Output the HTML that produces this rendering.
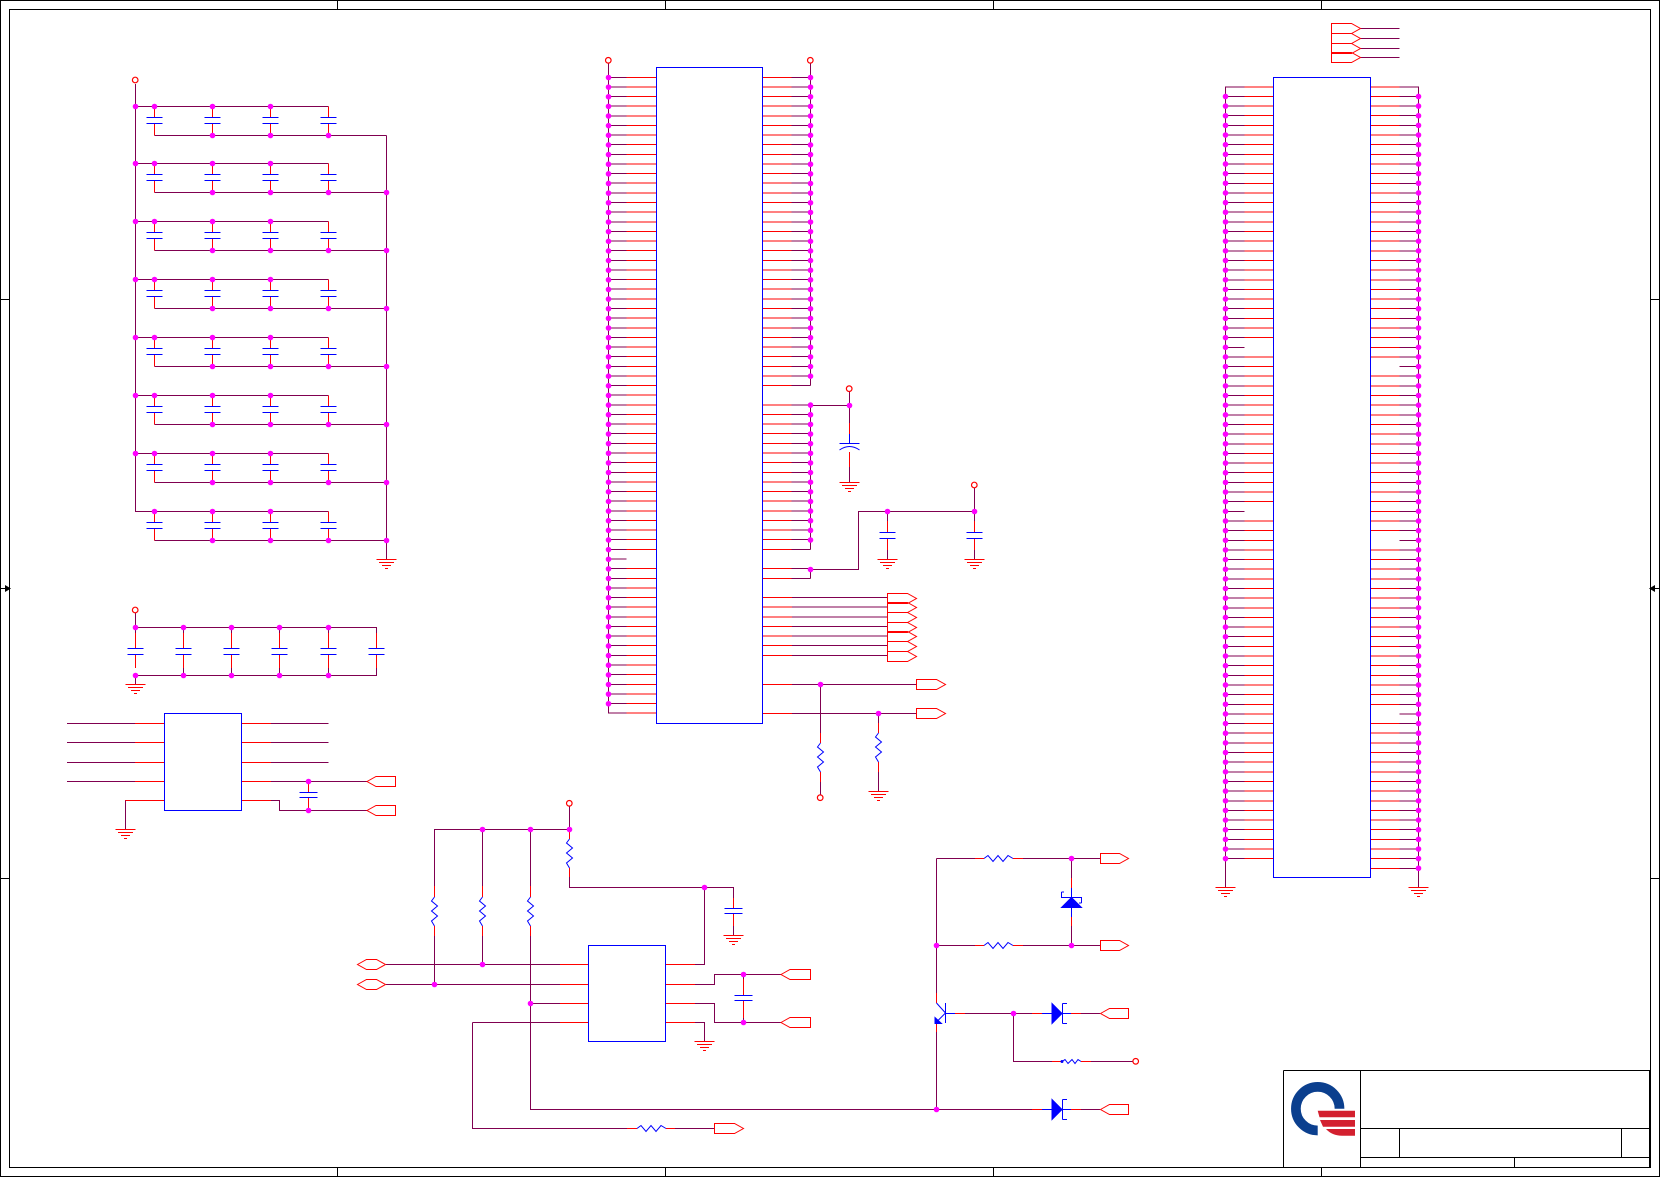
<!DOCTYPE html>
<html><head><meta charset="utf-8"><title>Schematic</title>
<style>html,body{margin:0;padding:0;background:#fff;width:1661px;height:1178px;overflow:hidden}svg{display:block}</style></head>
<body>
<svg xmlns="http://www.w3.org/2000/svg" width="1661" height="1178" viewBox="0 0 1661 1178">
<defs>
<g id="g" fill="none" stroke="#f00" shape-rendering="crispEdges"><path d="M-10 0H10M-7.500 3H7.500M-4.500 6H4.500M-1.500 9H1.500"/></g>
<path id="rv" fill="none" stroke="#00f" d="M0 0L-3 4L3 9L-3 14L3 19L-3 24L0 29"/>
<path id="rh" fill="none" stroke="#00f" d="M0 0L4 -3L9 3L14 -3L19 3L24 -3L29 0"/>
<g id="row" fill="none" shape-rendering="crispEdges">
<path stroke="#800050" d="M135 0H328.500M154.500 29H386.500"/>
<path stroke="#f00" d="M154.500 0V11M154.500 17V29M212.500 0V11M212.500 17V29M270.500 0V11M270.500 17V29M328.500 0V11M328.500 17V29"/>
<path stroke="#00f" d="M146.500 11H162.500M146.500 17H162.500M204.500 11H220.500M204.500 17H220.500M262.500 11H278.500M262.500 17H278.500M320.500 11H336.500M320.500 17H336.500"/>
</g>
<g id="dt"><circle cx="154.500" cy="0" r="2.800"/><circle cx="212.500" cy="0" r="2.800"/><circle cx="270.500" cy="0" r="2.800"/><circle cx="212.500" cy="29" r="2.800"/><circle cx="270.500" cy="29" r="2.800"/><circle cx="328.500" cy="29" r="2.800"/></g>
</defs>
<rect width="1661" height="1178" fill="#fff"/>

<!-- frame -->
<g fill="none" stroke="#000" shape-rendering="crispEdges">
<rect x="0.500" y="0.500" width="1659" height="1176"/>
<rect x="9.500" y="9.500" width="1641" height="1158"/>
<path d="M337.500 0V9M665.500 0V9M993.500 0V9M1321.500 0V9M337.500 1168V1177M665.500 1168V1177M993.500 1168V1177M1321.500 1168V1177M0 299.500H9M0 878.500H9M1651 299.500H1660M1651 878.500H1660M0 588.500H9M1651 588.500H1660"/>
<path d="M1283.500 1070.500H1650.500M1283.500 1070.500V1167M1360.500 1070.500V1167M1360.500 1128.500H1650M1360.500 1157.500H1650M1399.500 1128.500V1157.500M1621.500 1128.500V1157.500M1514.500 1157.500V1167M1649.500 1070.500V1168"/>
</g>
<path d="M5 585L11 588.500L5 592ZM1655 585L1649 588.500L1655 592Z" fill="#000"/>

<!-- logo -->
<path d="M1339.500 1108.700A21.800 21.800 0 1 0 1317.700 1130.500" fill="none" stroke="#0b3f8e" stroke-width="9.700"/>
<path d="M1317.700 1110.700H1355V1117.300H1319.500ZM1320 1120H1355V1126.700H1323ZM1326 1129H1355V1135.700H1342Q1332 1135.700 1326 1129Z" fill="#d3202f"/>

<!-- decap block 1 -->
<use href="#row" y="106.500"/><use href="#row" y="163.500"/><use href="#row" y="221.500"/><use href="#row" y="279.500"/><use href="#row" y="337.500"/><use href="#row" y="395.500"/><use href="#row" y="453.500"/><use href="#row" y="511.500"/>
<path shape-rendering="crispEdges" fill="none" stroke="#800050" d="M135.500 84V511.500M386.500 135.500V559"/>
<use href="#g" x="386.500" y="559.500"/>
<g fill="#f0f"><use href="#dt" y="106.500"/><use href="#dt" y="163.500"/><use href="#dt" y="221.500"/><use href="#dt" y="279.500"/><use href="#dt" y="337.500"/><use href="#dt" y="395.500"/><use href="#dt" y="453.500"/><use href="#dt" y="511.500"/>
<path stroke="#f0f" stroke-width="5.600" stroke-linecap="round" d="M135.500 106.500h.01M135.500 163.500h.01M135.500 221.500h.01M135.500 279.500h.01M135.500 337.500h.01M135.500 395.500h.01M135.500 453.500h.01M386.500 192.500h.01M386.500 250.500h.01M386.500 308.500h.01M386.500 366.500h.01M386.500 424.500h.01M386.500 482.500h.01M386.500 540.500h.01"/></g>

<!-- main purple wires -->
<g fill="none" stroke="#800050" shape-rendering="crispEdges">
<path d="M135.500 613V627.500H376.500V633M135.500 627.500V633M183.500 627.500V633M231.500 627.500V633M279.500 627.500V633M328.500 627.500V633M135.500 675.500V684M135.500 675.500H376.500V668M183.500 675.500V668M231.500 675.500V668M279.500 675.500V668M328.500 675.500V668"/>
<path d="M67 723.500H135M67 742.500H135M67 762.500H135M67 781.500H135M135 800.500H125.500V829M271 723.500H328.500M271 742.500H328.500M271 762.500H328.500M271 781.500H367M271 800.500H279.500V810.500H367"/>
<path d="M608.500 63V713.500M810.500 63V385.500M810.500 405.500V549.500M810.500 405.500H849.500V423M849.500 392V405M849.500 467V482M810.500 569.500V578.500M810.500 569.500H858.500V511.500H974.500M974.500 488V521M974.500 550V559M887.500 511.500V521M887.500 550V559"/>
<path d="M792 684.500H916.500M792 713.500H916.500M820.500 684.500V733M820.500 782V795M878.500 713.500V723M878.500 772V791"/>
<path d="M569.500 806V829.500H434.500V886M482.500 829.500V886M530.500 829.500V886M569.500 877V887.500H733.500V898M733.500 926V935M704.500 887.500V964.500H695M434.500 936V984.500M482.500 936V964.500M530.500 936V1109.500H1032M386 964.500H560M386 984.500H560M530.500 1003.500H560M472.500 1022.500H560M472.500 1022.500V1128.500H627M675 1128.500H714"/>
<path d="M695 984.500H714.500V974.500H781M695 1003.500H714.500V1022.500H781M695 1022.500H704.500V1041M743.500 974.500V985M743.500 1012V1022.500"/>
<path d="M936.500 858.500H975M1023 858.500H1100M936.500 945.500H975M1023 945.500H1100M936.500 858.500V993M936.500 1032V1109.500M1071.500 858.500V878M1071.500 926V945.500M965 1013.500H1032M1081 1013.500H1100M1013.500 1013.500V1061.500H1052M1091 1061.500H1133M1081 1109.500H1100"/>
<path d="M1360 28.500H1399.500M1360 38.500H1399.500M1360 48.500H1399.500M1360 57.500H1399.500M1225.500 86.500V887M1418.500 86.500V887"/>
</g>

<!-- combs: mid IC left -->
<g fill="none" shape-rendering="crispEdges">
<line x1="617.500" x2="617.500" y1="76.750" y2="713.660" stroke="#800050" stroke-width="18" stroke-dasharray="1 8.635"/>
<line x1="641.500" x2="641.500" y1="76.750" y2="549.870" stroke="#f00" stroke-width="30" stroke-dasharray="1 8.635"/>
<line x1="641.500" x2="641.500" y1="568.130" y2="713.660" stroke="#f00" stroke-width="30" stroke-dasharray="1 8.635"/>
<!-- mid IC right -->
<line x1="777.500" x2="777.500" y1="76.750" y2="386.070" stroke="#f00" stroke-width="29" stroke-dasharray="1 8.635"/>
<line x1="777.500" x2="777.500" y1="404.340" y2="549.870" stroke="#f00" stroke-width="29" stroke-dasharray="1 8.635"/>
<line x1="777.500" x2="777.500" y1="568.130" y2="578.770" stroke="#f00" stroke-width="29" stroke-dasharray="1 8.635"/>
<line x1="777.500" x2="777.500" y1="597.040" y2="655.850" stroke="#f00" stroke-width="29" stroke-dasharray="1 8.635"/>
<line x1="801" x2="801" y1="76.750" y2="386.070" stroke="#800050" stroke-width="19" stroke-dasharray="1 8.635"/>
<line x1="801" x2="801" y1="404.340" y2="549.870" stroke="#800050" stroke-width="19" stroke-dasharray="1 8.635"/>
<line x1="801" x2="801" y1="568.130" y2="578.770" stroke="#800050" stroke-width="19" stroke-dasharray="1 8.635"/>
<line x1="839.750" x2="839.750" y1="597.040" y2="655.850" stroke="#800050" stroke-width="95.500" stroke-dasharray="1 8.635"/>
<!-- right IC left -->
<line x1="1235" x2="1235" y1="86.300" y2="859.140" stroke="#800050" stroke-width="19" stroke-dasharray="1 8.648"/>
<line x1="1259" x2="1259" y1="86.300" y2="338.150" stroke="#f00" stroke-width="29" stroke-dasharray="1 8.648"/>
<line x1="1259" x2="1259" y1="356.440" y2="502.160" stroke="#f00" stroke-width="29" stroke-dasharray="1 8.648"/>
<line x1="1259" x2="1259" y1="520.460" y2="859.140" stroke="#f00" stroke-width="29" stroke-dasharray="1 8.648"/>
<!-- right IC right -->
<line x1="1409" x2="1409" y1="86.300" y2="868.790" stroke="#800050" stroke-width="19" stroke-dasharray="1 8.648"/>
<line x1="1385" x2="1385" y1="86.300" y2="357.440" stroke="#f00" stroke-width="29" stroke-dasharray="1 8.648"/>
<line x1="1385" x2="1385" y1="375.740" y2="531.110" stroke="#f00" stroke-width="29" stroke-dasharray="1 8.648"/>
<line x1="1385" x2="1385" y1="549.400" y2="704.770" stroke="#f00" stroke-width="29" stroke-dasharray="1 8.648"/>
<line x1="1385" x2="1385" y1="723.070" y2="868.790" stroke="#f00" stroke-width="29" stroke-dasharray="1 8.648"/>
</g>

<!-- red wires -->
<g fill="none" stroke="#f00" shape-rendering="crispEdges">
<path d="M135.500 633V648M183.500 633V648M231.500 633V648M279.500 633V648M328.500 633V648M376.500 633V648M135.500 654V668M183.500 654V668M231.500 654V668M279.500 654V668M328.500 654V668M376.500 654V668"/>
<path d="M135 723.500H164M135 742.500H164M135 762.500H164M135 781.500H164M125.500 800.500H164M241 723.500H271M241 742.500H271M241 762.500H271M241 781.500H271M241 800.500H271M308.500 781.500V792M308.500 798V810"/>
<path d="M849.500 423V434M849.500 452V467M887.500 521V532M887.500 539V550M974.500 521V532M974.500 539V550"/>
<path d="M762 684.500H792M762 713.500H792M820.500 733V743M820.500 772V782M878.500 723V733M878.500 762V772"/>
<path d="M569.500 832V839M569.500 868V877M434.500 886V897M482.500 886V897M530.500 886V897M434.500 926V936M482.500 926V936M530.500 926V936M733.500 898V908M733.500 914V926"/>
<path d="M560 964.500H588M560 984.500H588M560 1003.500H588M560 1022.500H588M665 964.500H695M665 984.500H695M665 1003.500H695M665 1022.500H695M627 1128.500H637M666 1128.500H675M743.500 979V996M743.500 1001V1018"/>
<path d="M975 858.500H984M1013 858.500H1023M975 945.500H984M1013 945.500H1023M1071.500 878V888M1071.500 917V926M936.500 993V1003M936.500 1023V1032M955 1013.500H965M1032 1013.500H1042M1071 1013.500H1081M1052 1061.500H1062M1081 1061.500H1091M1032 1109.500H1042M1071 1109.500H1081"/>
</g>

<!-- grounds -->
<use href="#g" x="135.500" y="684.500"/><use href="#g" x="125.500" y="829.500"/><use href="#g" x="849.500" y="482.500"/><use href="#g" x="887.500" y="559.500"/><use href="#g" x="974.500" y="559.500"/><use href="#g" x="878.500" y="791.500"/><use href="#g" x="733.500" y="935.500"/><use href="#g" x="704.500" y="1041.500"/><use href="#g" x="1225.500" y="887.500"/><use href="#g" x="1418.500" y="887.500"/>

<!-- ports -->
<g fill="#fff" stroke="#f00" stroke-linejoin="miter">
<path d="M887.500 593.500H907.500L916.500 598.500L907.500 603.500H887.500ZM887.500 602.500H907.500L916.500 607.500L907.500 612.500H887.500ZM887.500 612.500H907.500L916.500 617.500L907.500 622.500H887.500ZM887.500 622.500H907.500L916.500 627.500L907.500 632.500H887.500ZM887.500 631.500H907.500L916.500 636.500L907.500 641.500H887.500ZM887.500 641.500H907.500L916.500 646.500L907.500 651.500H887.500ZM887.500 651.500H907.500L916.500 656.500L907.500 661.500H887.500Z"/>
<path d="M916.500 679.500H936.500L945.500 684.500L936.500 689.500H916.500ZM916.500 708.500H936.500L945.500 713.500L936.500 718.500H916.500Z"/>
<path d="M1331.500 23.500H1351.500L1360.500 28.500L1351.500 33.500H1331.500ZM1331.500 33.500H1351.500L1360.500 38.500L1351.500 43.500H1331.500ZM1331.500 43.500H1351.500L1360.500 48.500L1351.500 53.500H1331.500ZM1331.500 52.500H1351.500L1360.500 57.500L1351.500 62.500H1331.500Z"/>
<path d="M367 781.500L376 776.500H395.500V786.500H376ZM367 810.500L376 805.500H395.500V815.500H376Z"/>
<path d="M357.500 964.500L366.500 959.500H376.500L385.500 964.500L376.500 969.500H366.500ZM357.500 984.500L366.500 979.500H376.500L385.500 984.500L376.500 989.500H366.500Z"/>
<path d="M781 974.500L790 969.500H810.500V979.500H790ZM781 1022.500L790 1017.500H810.500V1027.500H790Z"/>
<path d="M714.500 1123.500H734.500L743.500 1128.500L734.500 1133.500H714.500Z"/>
<path d="M1100.500 853.500H1119.500L1128.500 858.500L1119.500 863.500H1100.500ZM1100.500 940.500H1119.500L1128.500 945.500L1119.500 950.500H1100.500Z"/>
<path d="M1100.500 1013.500L1109.500 1008.500H1128.500V1018.500H1109.500ZM1100.500 1109.500L1109.500 1104.500H1128.500V1114.500H1109.500Z"/>
</g>

<!-- blue parts -->
<g fill="none" stroke="#00f" shape-rendering="crispEdges">
<rect x="656.500" y="67.500" width="106" height="656"/>
<rect x="1273.500" y="77.500" width="97" height="800"/>
<rect x="164.500" y="713.500" width="77" height="97"/>
<rect x="588.500" y="945.500" width="77" height="96"/>
<path d="M127.500 648.500H143.500M127.500 654.500H143.500M175.500 648.500H191.500M175.500 654.500H191.500M223.500 648.500H239.500M223.500 654.500H239.500M271.500 648.500H287.500M271.500 654.500H287.500M320.500 648.500H336.500M320.500 654.500H336.500M368.500 648.500H384.500M368.500 654.500H384.500"/>
<path d="M299.500 792.500H317.500M299.500 797.500H317.500M724.500 908.500H742.500M724.500 913.500H742.500M734.500 995.500H752.500M734.500 1000.500H752.500M839.500 443.500H859.500M849.500 434V443M879.500 532.500H895.500M879.500 538.500H895.500M966.500 532.500H982.500M966.500 538.500H982.500"/>
<path d="M1071.500 888V917M1061.500 892V897.500H1081.500V903M1061.500 892H1064M1081.500 903H1079M945.500 1003V1023M945.500 1013.500H955M1042 1013.500H1071M1042 1109.500H1071M1062.500 1003.500V1023.500M1062.500 1003.500H1067M1062.500 1023.500H1067M1062.500 1099.500V1119.500M1062.500 1099.500H1067M1062.500 1119.500H1067"/>
</g>
<path d="M839.500 450Q849.500 443 859.500 450" fill="none" stroke="#00f"/>
<path d="M936.500 1003L945.500 1013L936.500 1022" fill="none" stroke="#00f"/>
<path d="M935 1023.500V1017.500L941.500 1023.500Z" fill="#00f" stroke="#00f"/>
<path d="M1071.500 897.500L1081.500 907.500H1061.500ZM1052 1003.500L1062 1013.500L1052 1023.500ZM1052 1099.500L1062 1109.500L1052 1119.500Z" fill="#00f" stroke="#00f"/>
<use href="#rv" x="820.500" y="743"/><use href="#rv" x="878.500" y="733"/>
<use href="#rv" x="569.500" y="839"/><use href="#rv" x="434.500" y="897"/><use href="#rv" x="482.500" y="897"/><use href="#rv" x="530.500" y="897"/>
<use href="#rh" x="637" y="1128.500"/><use href="#rh" x="984" y="858.500"/><use href="#rh" x="984" y="945.500"/>
<path d="M1062 1061.500L1065 1059.500L1068 1063.500L1072 1059.500L1075 1063.500L1078 1059.500L1081 1061.500" fill="none" stroke="#00f"/>
<circle cx="1062" cy="1061.500" r="1.500" fill="#00f"/>

<!-- dots via dash lines -->
<g fill="none" stroke="#f0f" stroke-width="5.600" stroke-linecap="round">
<line x1="608.500" x2="608.500" y1="77.500" y2="704.300" stroke-dasharray="0.010 9.625"/>
<line x1="810.500" x2="810.500" y1="77.500" y2="376.700" stroke-dasharray="0.010 9.625"/>
<line x1="810.500" x2="810.500" y1="405.100" y2="540.500" stroke-dasharray="0.010 9.625"/>
<line x1="1225.500" x2="1225.500" y1="96.450" y2="859.200" stroke-dasharray="0.010 9.638"/>
<line x1="1418.500" x2="1418.500" y1="96.450" y2="868.800" stroke-dasharray="0.010 9.638"/>
<path d="M135.500 627.500h.01M183.500 627.500h.01M231.500 627.500h.01M279.500 627.500h.01M328.500 627.500h.01M135.500 675.500h.01M183.500 675.500h.01M231.500 675.500h.01M279.500 675.500h.01M328.500 675.500h.01M308.500 781.500h.01M308.500 810.500h.01M810.500 569.500h.01M849.500 405.500h.01M887.500 511.500h.01M974.500 511.500h.01M820.500 684.500h.01M878.500 713.500h.01M482.500 829.500h.01M530.500 829.500h.01M569.500 829.500h.01M704.500 887.500h.01M434.500 984.500h.01M482.500 964.500h.01M530.500 1003.500h.01M743.500 974.500h.01M743.500 1022.500h.01M1071.500 858.500h.01M936.500 945.500h.01M1071.500 945.500h.01M1013.500 1013.500h.01M936.500 1109.500h.01" />
</g>

<!-- circles -->
<g fill="#fff" stroke="#f00" stroke-width="1.200">
<circle cx="135.200" cy="80" r="2.800"/><circle cx="135.200" cy="610" r="2.800"/><circle cx="608.300" cy="60.300" r="2.800"/><circle cx="810.300" cy="60.300" r="2.800"/><circle cx="849.200" cy="388.700" r="2.800"/><circle cx="974.300" cy="485" r="2.800"/><circle cx="820.200" cy="797.700" r="2.800"/><circle cx="569.300" cy="803.300" r="2.800"/><circle cx="1135.700" cy="1061.300" r="2.800"/>
</g>
</svg>
</body></html>
